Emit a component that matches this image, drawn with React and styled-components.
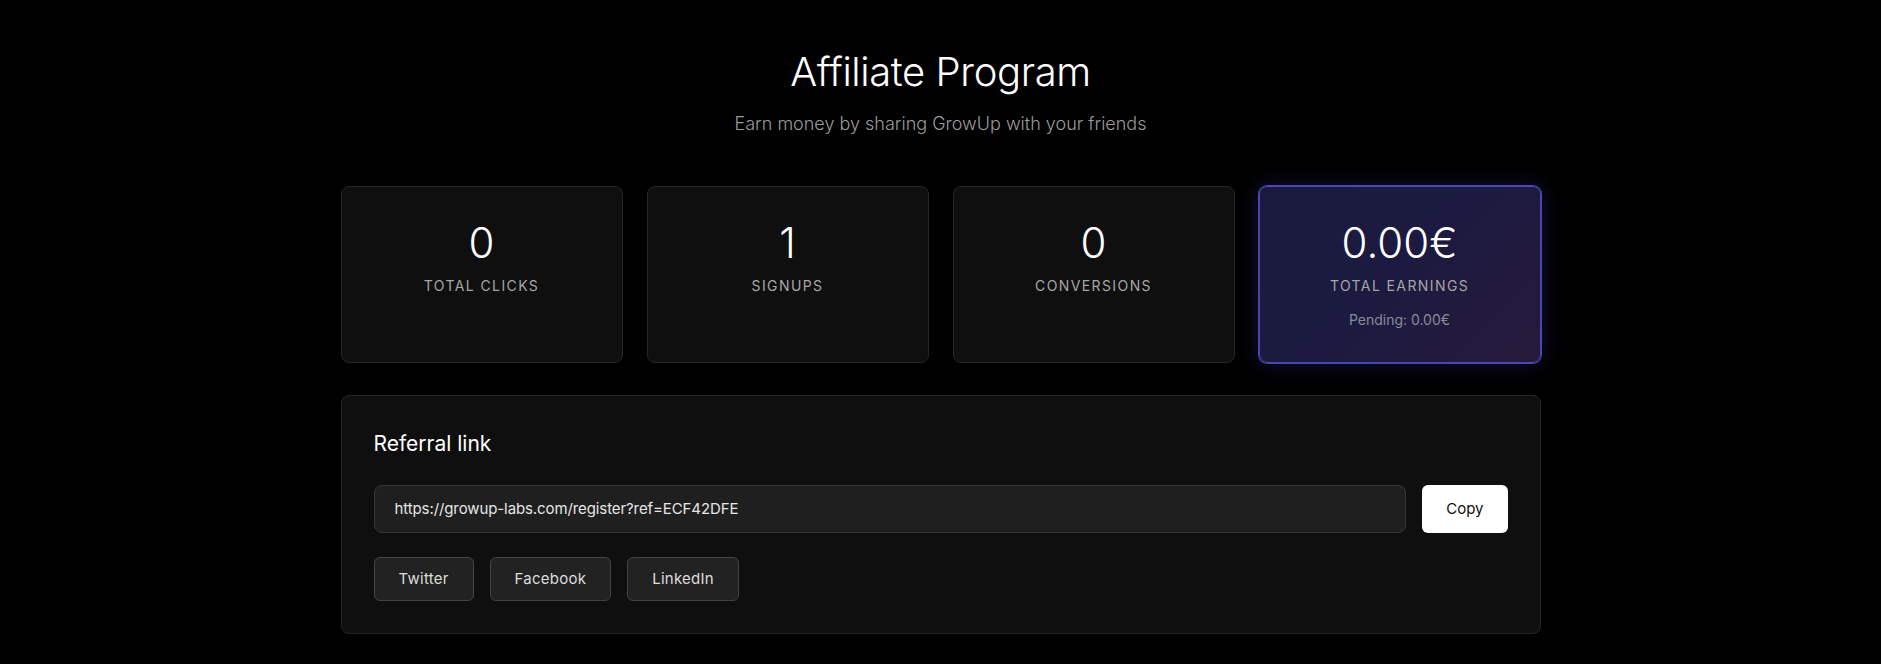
import styled, { createGlobalStyle } from "styled-components"

const GlobalStyle = createGlobalStyle`
body {
    margin: 0;
    background: #000;
    color: #fff;
    font-family: Inter, "Noto Sans", sans-serif;
}
* {
    box-sizing: border-box;
}
`

const Page = styled.div`
max-width: 1200px;
margin: 0 auto;
padding: 48px 0 30px;
`

const Header = styled.header`
text-align: center;
margin-bottom: 49px;
`

const Title = styled.h1`
margin: 0;
font-size: 40px;
font-weight: 300;
line-height: 1.2;
letter-spacing: -0.4px;
`

const Subtitle = styled.p`
margin: 14px 0 0;
font-size: 18px;
line-height: 1.5;
font-weight: 300;
color: #9b9b9b;
`

const StatsGrid = styled.div`
display: grid;
grid-template-columns: repeat(4, 1fr);
gap: 24px;
margin-bottom: 32px;
`

const StatCard = styled.div`
min-height: 177px;
padding: 31px 24px 27px;
border-radius: 8px;
text-align: center;
border: 1px solid ${props => props.$highlight ? "#4a47b0" : "#262626"};
background: ${props => props.$highlight
    ? "linear-gradient(135deg, #1a1a3e 0%, #1c1a40 50%, #271a3c 100%)"
    : "#0f0f0f"};
box-shadow: ${props => props.$highlight
    ? "0 0 0 1px #4a47b0, 0 0 22px rgba(79, 70, 229, 0.28)"
    : "none"};
`

const StatValue = styled.div`
font-size: 42px;
font-weight: 300;
line-height: 1.2;
color: #fff;
`

const StatLabel = styled.div`
margin-top: 8px;
font-size: 14px;
line-height: 1.4;
letter-spacing: 1.4px;
text-transform: uppercase;
color: #a6a6a6;
`

const StatNote = styled.div`
margin-top: 13px;
font-size: 14px;
line-height: 1.5;
color: #8a8a99;
`

const Section = styled.section`
padding: 32px;
background: #0f0f0f;
border: 1px solid #262626;
border-radius: 8px;
`

const SectionTitle = styled.h2`
margin: 0 0 25px;
font-size: 21px;
font-weight: 400;
line-height: 1.5;
color: #fff;
`

const LinkRow = styled.div`
display: flex;
gap: 16px;
margin-bottom: 24px;
`

const LinkInput = styled.input`
flex: 1;
height: 48px;
padding: 0 20px;
font-family: inherit;
font-size: 15px;
letter-spacing: -0.1px;
color: #e6e6e6;
background: #1f1f1f;
border: 1px solid #383838;
border-radius: 8px;
outline: none;
`

const CopyButton = styled.button`
height: 48px;
padding: 0 24px;
font-family: inherit;
font-size: 15px;
color: #111;
background: #fff;
border: none;
border-radius: 6px;
cursor: pointer;
`

const ShareRow = styled.div`
display: flex;
gap: 16px;
`

const ShareButton = styled.button`
height: 44px;
padding: 0 24px;
font-family: inherit;
font-size: 15px;
letter-spacing: 0.25px;
color: #ddd;
background: #222;
border: 1px solid #434343;
border-radius: 6px;
cursor: pointer;
`

const stats = [
    { value: "0", label: "Total clicks" },
    { value: "1", label: "Signups" },
    { value: "0", label: "Conversions" },
    { value: "0.00€", label: "Total earnings", note: "Pending: 0.00€", highlight: true },
]

function App () {
    return (
        <>
            <GlobalStyle />
            <Page>
                <Header>
                    <Title>Affiliate Program</Title>
                    <Subtitle>Earn money by sharing GrowUp with your friends</Subtitle>
                </Header>
                <StatsGrid>
                    {stats.map((s, i) => (
                        <StatCard key={i} $highlight={s.highlight}>
                            <StatValue>{s.value}</StatValue>
                            <StatLabel>{s.label}</StatLabel>
                            {s.note && <StatNote>{s.note}</StatNote>}
                        </StatCard>
                    ))}
                </StatsGrid>
                <Section>
                    <SectionTitle>Referral link</SectionTitle>
                    <LinkRow>
                        <LinkInput readOnly value="https://growup-labs.com/register?ref=ECF42DFE" />
                        <CopyButton>Copy</CopyButton>
                    </LinkRow>
                    <ShareRow>
                        <ShareButton>Twitter</ShareButton>
                        <ShareButton>Facebook</ShareButton>
                        <ShareButton>LinkedIn</ShareButton>
                    </ShareRow>
                </Section>
            </Page>
        </>
    )
}

export default App
